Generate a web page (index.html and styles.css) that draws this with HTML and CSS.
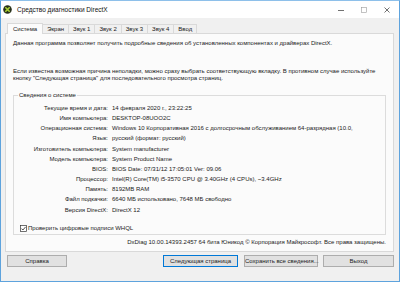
FILE: index.html
```html
<!DOCTYPE html>
<html lang="ru">
<head>
  <meta charset="UTF-8" />
  <title>Средство диагностики DirectX</title>
  <link rel="stylesheet" href="styles.css">
</head>
<body>
  <div class="window">
    <div class="titlebar">
      <svg class="app-icon" width="9" height="9" viewBox="0 0 9 9">
        <circle cx="4.5" cy="4.5" r="4.3" fill="#27301c"/>
        <path d="M2.3 2.3 L6.7 6.7 M6.7 2.3 L2.3 6.7" stroke="#a8d030" stroke-width="1.6"/>
      </svg>
      <span class="title">Средство диагностики DirectX</span>
      <div class="controls">
        <svg width="6" height="6" viewBox="0 0 6 6"><path d="M0 3.5 H6" stroke="#333" stroke-width="0.7"/></svg>
        <svg width="6" height="6" viewBox="0 0 6 6"><rect x="0.5" y="0.5" width="5" height="5" fill="none" stroke="#999" stroke-width="0.6"/></svg>
        <svg width="6" height="6" viewBox="0 0 6 6"><path d="M0.5 0.5 L5.5 5.5 M5.5 0.5 L0.5 5.5" stroke="#333" stroke-width="0.7"/></svg>
      </div>
    </div>

    <div class="tabs">
      <span class="tab active">Система</span>
      <span class="tab">Экран</span>
      <span class="tab">Звук 1</span>
      <span class="tab">Звук 2</span>
      <span class="tab">Звук 3</span>
      <span class="tab">Звук 4</span>
      <span class="tab">Ввод</span>
    </div>

    <div class="panel">
      <p class="intro">Данная программа позволяет получить подробные сведения об установленных компонентах и драйверах DirectX.</p>
      <p class="hint">Если известна возможная причина неполадки, можно сразу выбрать соответствующую вкладку. В противном случае используйте кнопку "Следующая страница" для последовательного просмотра страниц.</p>

      <fieldset class="group">
        <legend>Сведения о системе</legend>
        <div class="rows">
          <span class="key">Текущие время и дата:</span><span>14 февраля 2020 г., 23:22:25</span>
          <span class="key">Имя компьютера:</span><span>DESKTOP-08UOO2C</span>
          <span class="key">Операционная система:</span><span>Windows 10 Корпоративная 2016 с долгосрочным обслуживанием 64-разрядная (10.0,</span>
          <span class="key">Язык:</span><span>русский (формат: русский)</span>
          <span class="key">Изготовитель компьютера:</span><span>System manufacturer</span>
          <span class="key">Модель компьютера:</span><span>System Product Name</span>
          <span class="key">BIOS:</span><span>BIOS Date: 07/31/12 17:05:01 Ver: 09.06</span>
          <span class="key">Процессор:</span><span>Intel(R) Core(TM) i5-3570 CPU @ 3.40GHz (4 CPUs), ~3.4GHz</span>
          <span class="key">Память:</span><span>8192MB RAM</span>
          <span class="key">Файл подкачки:</span><span>6640 МБ использовано, 7648 МБ свободно</span>
          <span class="key">Версия DirectX:</span><span>DirectX 12</span>
        </div>
        <label class="check">
          <svg width="7" height="7" viewBox="0 0 7 7">
            <rect x="0.5" y="0.5" width="6" height="6" fill="#fff" stroke="#333" stroke-width="0.7"/>
            <path d="M1.5 3.6 L2.9 5 L5.6 1.9" fill="none" stroke="#222" stroke-width="0.8"/>
          </svg>
          Проверить цифровые подписи WHQL
        </label>
      </fieldset>

      <p class="copy">DxDiag 10.00.14393.2457 64 бита Юникод © Корпорация Майкрософт. Все права защищены.</p>
    </div>

    <div class="buttons">
      <button class="btn help">Справка</button>
      <button class="btn next">Следующая страница</button>
      <button class="btn save">Сохранить все сведения...</button>
      <button class="btn exit">Выход</button>
    </div>
  </div>
</body>
</html>
```

FILE: styles.css
```css
html, body { margin:0; padding:0; }
body { width:400px; height:282px; overflow:hidden; font-family:"Liberation Sans", Arial, sans-serif; font-size:6px; color:#1a1a1a; }

.window { box-sizing:border-box; width:400px; height:282px; border:1px solid #5ea3dd; border-top-color:#8ec0ea; background:#f0f0f0; display:flex; flex-direction:column; }

.titlebar { height:17px; background:#fff; display:flex; align-items:center; padding-left:2px; }
.app-icon { margin-right:5px; }
.title { font-size:6.5px; color:#111; }
.controls { margin-left:auto; display:flex; gap:17px; padding-right:9px; }

.tabs { display:flex; align-items:flex-end; margin-top:5px; padding-left:6px; height:10px; }
.tab { height:9px; line-height:9px; padding:0 4px; border:1px solid #d9d9d9; border-bottom:none; border-left:none; box-sizing:border-box; background:#f0f0f0; }
.tab.active { line-height:10px; background:#fbfbfb; border-left:1px solid #d9d9d9; margin-bottom:-1px; position:relative; z-index:1; height:11px; padding:0 5px; }

.panel { margin:0 5px 0 4px; border:1px solid #d9d9d9; background:#fbfbfb; padding:6px 7px 3px 7px; height:219px; box-sizing:border-box; display:flex; flex-direction:column; }
.panel p { margin:0; line-height:7px; }
.hint { margin-top:21px !important; }

.group { margin:10px 0 0 0; padding:4px 0 2px 0; border:1px solid #dcdcdc; width:373px; box-sizing:border-box; }
.group legend { padding:0 1px; margin-left:4px; line-height:7px; }
.rows { display:grid; grid-template-columns:94px 1fr; column-gap:4px; line-height:10.15px; white-space:nowrap; }
.key { text-align:right; }

.check { display:flex; align-items:center; gap:1px; margin:10px 0 0 6px; height:7px; }

.copy { text-align:right; width:373px; margin-top:4px !important; line-height:8px; }

.buttons { display:flex; margin:3px 5px 0 6px; }
.btn { font-family:inherit; font-size:6px; height:12px; padding:0; background:#e1e1e1; border:1px solid #adadad; color:#1a1a1a; white-space:nowrap; }
.help { width:60px; }
.next { width:75px; margin-left:auto; border-color:#0078d7; }
.save { width:74px; margin-left:6px; }
.exit { width:71px; margin-left:5px; }
```
